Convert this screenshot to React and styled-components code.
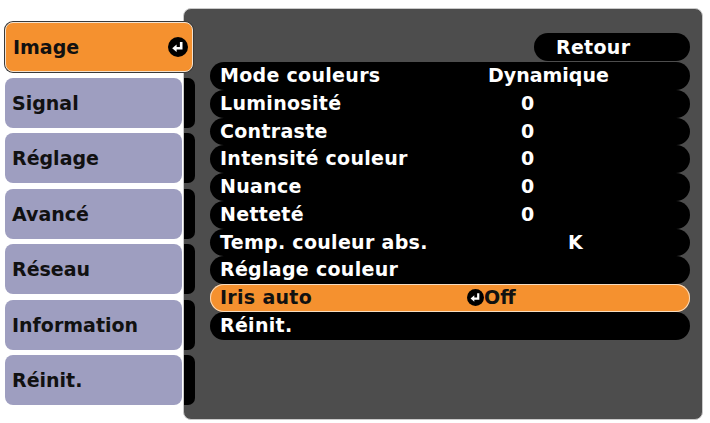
import React from 'react';
import styled, { createGlobalStyle } from 'styled-components';

const GlobalStyle = createGlobalStyle`
  html, body {
    margin: 0;
    padding: 0;
    background: #ffffff;
  }
  body {
    font-family: "DejaVu Sans", "Liberation Sans", sans-serif;
  }
`;

const Screen = styled.div`
  display: flex;
  align-items: flex-start;
  width: 710px;
  height: 423px;
  padding-left: 5px;
  box-sizing: border-box;
  overflow: hidden;
`;

const TabColumn = styled.div`
  position: relative;
  z-index: 2;
  display: flex;
  flex-direction: column;
  align-items: flex-start;
  gap: 5.5px;
  width: 177px;
  padding-top: 22px;
  flex: none;
`;

const Tab = styled.div`
  display: flex;
  align-items: center;
  justify-content: space-between;
  box-sizing: border-box;
  width: ${p => (p.$active ? '188px' : '177px')};
  height: 50px;
  padding: 0 4px 0 7px;
  border-radius: 8px;
  background: ${p => (p.$active ? '#f5912f' : '#9e9ec0')};
  border: ${p => (p.$active ? '1px solid #f4e2cf' : 'none')};
  box-shadow: ${p => (p.$active ? '0 0 0 1px #3a3a3a' : 'none')};
  color: #111;
  font-size: 19px;
  font-weight: bold;
`;

const Panel = styled.div`
  display: flex;
  flex: none;
  box-sizing: border-box;
  width: 520px;
  height: 412px;
  margin-top: 8px;
  margin-left: 1px;
  background: #4d4d4d;
  border: 1px solid #c9c9c9;
  border-radius: 8px;
  overflow: hidden;
`;

const Strip = styled.div`
  display: flex;
  flex-direction: column;
  gap: 5.5px;
  width: 11px;
  padding-top: 13px;
  flex: none;
`;

const StripPiece = styled.div`
  height: 50px;
  background: ${p => (p.$hidden ? 'transparent' : '#000')};
  border-radius: 0 7px 7px 0;
`;

const Content = styled.div`
  display: flex;
  flex-direction: column;
  flex: 1;
  padding: 24px 12px 0 15px;
`;

const BackButton = styled.div`
  align-self: flex-end;
  box-sizing: border-box;
  width: 156px;
  height: 28px;
  margin-bottom: 1px;
  padding-left: 22px;
  border-radius: 14px;
  background: #000;
  color: #fff;
  font-size: 19px;
  font-weight: bold;
  letter-spacing: 0.3px;
  line-height: 28px;
`;

const Rows = styled.div`
  display: flex;
  flex-direction: column;
`;

const Row = styled.div`
  display: grid;
  grid-template-columns: 268px 1fr;
  align-items: center;
  box-sizing: border-box;
  height: 27.75px;
  padding-left: 10px;
  border-radius: 14px;
  background: ${p => (p.$active ? '#f5912f' : '#000')};
  box-shadow: ${p => (p.$active ? 'inset 0 0 0 1px #f6dcc0' : 'none')};
  color: ${p => (p.$active ? '#111' : '#fff')};
  font-size: 19px;
  font-weight: bold;
  letter-spacing: 0.3px;
  line-height: 27.75px;
  white-space: nowrap;
`;

const Value = styled.span`
  display: flex;
  align-items: center;
  margin-left: ${p => p.$offset || 0}px;
  letter-spacing: 0;
`;

const EnterIcon = ({ size }) => (
  <svg width={size} height={size} viewBox="0 0 20 20" style={{ flex: 'none' }}>
    <circle cx="10" cy="10" r="10" fill="#000" />
    <path d="M13.2 5v6.2H8" stroke="#fff" strokeWidth="2.6" fill="none" strokeLinejoin="miter" />
    <path d="M4.2 11.2L8.6 7.4v7.6z" fill="#fff" />
  </svg>
);

const tabs = ['Image', 'Signal', 'Réglage', 'Avancé', 'Réseau', 'Information', 'Réinit.'];

const rows = [
  { label: 'Mode couleurs', value: 'Dynamique', offset: 0 },
  { label: 'Luminosité', value: '0', offset: 33 },
  { label: 'Contraste', value: '0', offset: 33 },
  { label: 'Intensité couleur', value: '0', offset: 33 },
  { label: 'Nuance', value: '0', offset: 33 },
  { label: 'Netteté', value: '0', offset: 33 },
  { label: 'Temp. couleur abs.', value: 'K', offset: 80 },
  { label: 'Réglage couleur', value: '' },
  { label: 'Iris auto', value: 'Off', offset: -21, active: true, enter: true },
  { label: 'Réinit.', value: '' },
];

const App = () => (
  <>
    <GlobalStyle />
    <Screen>
      <TabColumn>
        {tabs.map((tab, i) => (
          <Tab key={tab} $active={i === 0}>
            {tab}
            {i === 0 && <EnterIcon size={20} />}
          </Tab>
        ))}
      </TabColumn>
      <Panel>
        <Strip>
          {tabs.map((tab, i) => (
            <StripPiece key={tab} $hidden={i === 0} />
          ))}
        </Strip>
        <Content>
          <BackButton>Retour</BackButton>
          <Rows>
            {rows.map(row => (
              <Row key={row.label} $active={row.active}>
                <span>{row.label}</span>
                <Value $offset={row.offset}>
                  {row.enter && <EnterIcon size={17} />}
                  {row.value}
                </Value>
              </Row>
            ))}
          </Rows>
        </Content>
      </Panel>
    </Screen>
  </>
);

export default App;
